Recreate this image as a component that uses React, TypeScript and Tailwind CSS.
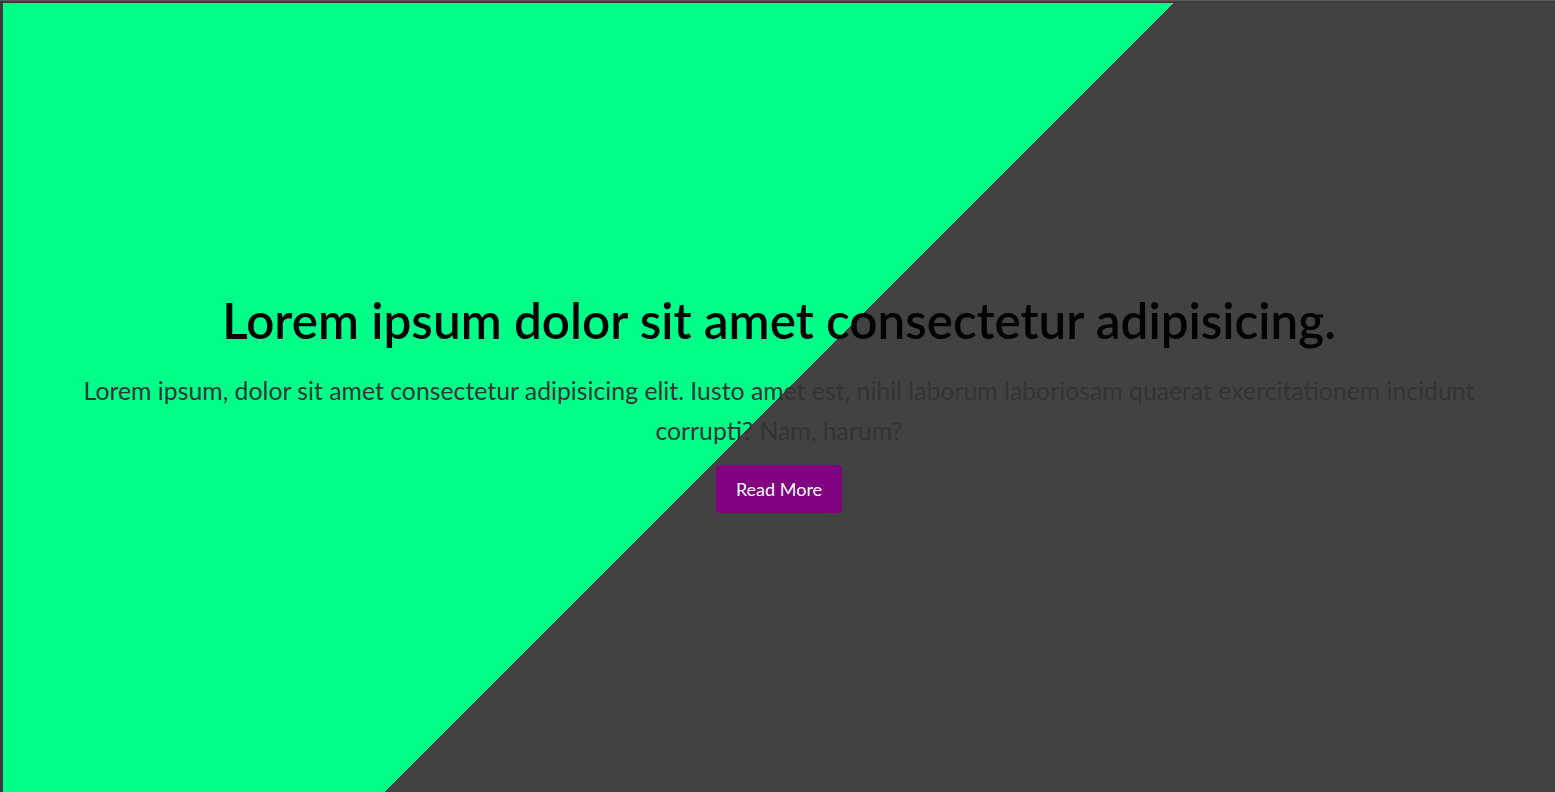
import React from 'react';

export default function App() {
  return (
    <div className="h-[792px] w-full bg-[#3a3a3a] border-t border-[#5c5c5c] pt-[2px] pl-[3px] overflow-hidden">
      <section
        className="h-full w-full flex flex-col items-center justify-center text-center px-16 pt-2 bg-[linear-gradient(135deg,#00ff88_50%,#424242_50%)]"
        style={{ fontFamily: 'Lato, "Open Sans", sans-serif' }}
      >
        <h1 className="text-[49.4px] font-semibold text-black leading-tight mb-5">
          Lorem ipsum dolor sit amet consectetur adipisicing.
        </h1>
        <p className="text-[24.8px] leading-[40px] text-[#333] max-w-[1420px]">
          Lorem ipsum, dolor sit amet consectetur adipisicing elit. Iusto amet est, nihil laborum laboriosam quaerat exercitationem incidunt corrupti? Nam, harum?
        </p>
        <button className="mt-[14px] bg-[#800080] text-white text-[18px] px-5 py-[10.5px] rounded">
          Read More
        </button>
      </section>
    </div>
  );
}
